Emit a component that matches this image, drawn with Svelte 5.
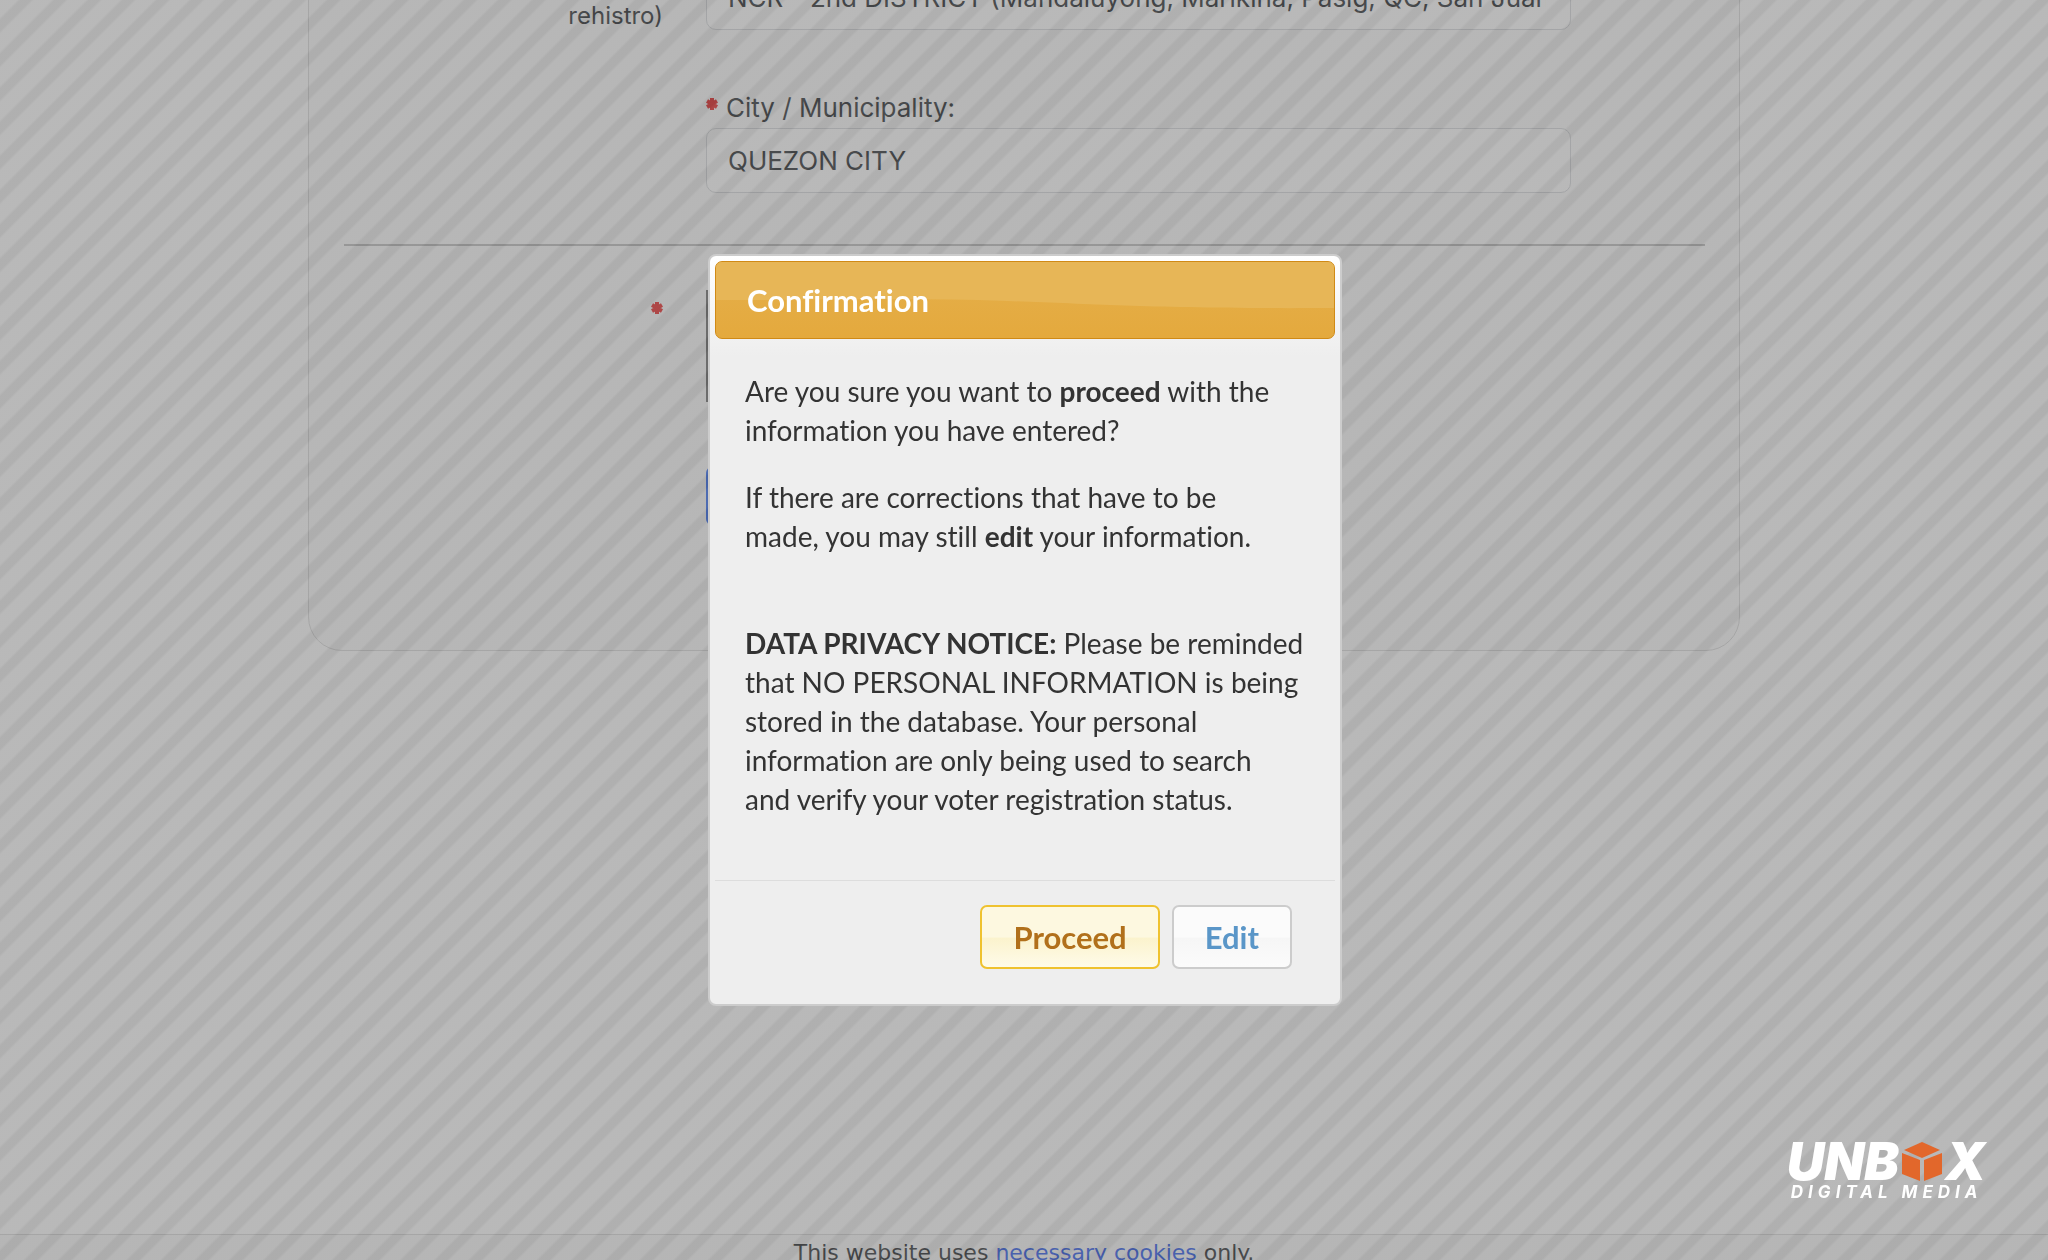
<script>
  let open = true;
  let district = 'ncr2';
  let city = 'qc';

  function close() {
    open = false;
  }
</script>

<div class="page">
  <form class="panel" on:submit|preventDefault>
    <div class="row">
      <label class="side first" for="district">rehistro)</label>
      <div class="fields">
        <select id="district" bind:value={district}>
          <option value="ncr2">NCR - 2nd DISTRICT (Mandaluyong, Marikina, Pasig, QC, San Juan)</option>
        </select>
        <label class="field-label" for="city">
          <svg class="star" viewBox="0 0 12 12" aria-hidden="true">
            <path d="M6 0v12M1 3l10 6M11 3L1 9" />
          </svg>
          City / Municipality:
        </label>
        <select id="city" bind:value={city}>
          <option value="qc">QUEZON CITY</option>
        </select>
      </div>
    </div>

    <hr />

    <div class="row">
      <div class="side">
        <svg class="star" viewBox="0 0 12 12" aria-hidden="true">
          <path d="M6 0v12M1 3l10 6M11 3L1 9" />
        </svg>
      </div>
      <div class="fields">
        <div class="captcha"></div>
        <button class="submit" type="submit" aria-label="Submit"></button>
      </div>
    </div>
  </form>

  <footer>
    <p>This website uses <a href="#cookies">necessary cookies</a> only.</p>
  </footer>
</div>

{#if open}
  <div class="overlay">
    <div class="dialog" role="dialog" aria-modal="true" aria-labelledby="dialog-title">
      <div class="titlebar">
        <svg class="gloss" viewBox="0 0 616 76" preserveAspectRatio="none" aria-hidden="true">
          <path d="M0 38C120 38 200 36 290 39S440 47 616 46V0H0z" />
        </svg>
        <h2 id="dialog-title">Confirmation</h2>
      </div>
      <div class="content">
        <p>
          Are you sure you want to <strong>proceed</strong> with the<br />
          information you have entered?
        </p>
        <p>
          If there are corrections that have to be<br />
          made, you may still <strong>edit</strong> your information.
        </p>
        <p class="notice">
          <strong>DATA PRIVACY NOTICE:</strong> Please be reminded<br />
          that NO PERSONAL INFORMATION is being<br />
          stored in the database. Your personal<br />
          information are only being used to search<br />
          and verify your voter registration status.
        </p>
      </div>
      <div class="actions">
        <button class="btn btn-proceed" type="button" on:click={close}>Proceed</button>
        <button class="btn btn-edit" type="button" on:click={close}>Edit</button>
      </div>
    </div>
  </div>
{/if}

<div class="brand">
  <div class="brand-name">
    <span>UNB</span>
    <svg viewBox="0 0 40 40" aria-hidden="true">
      <path d="M20 0L38 8 20 16 2 8zM0 11l18 7v21L0 32zM22 18l18-7v21l-18 7z" />
    </svg>
    <span>X</span>
  </div>
  <div class="brand-sub">DIGITAL MEDIA</div>
</div>

<style>
  :global(body) {
    background: #fff;
    overflow: hidden;
  }

  .page {
    display: flex;
    flex-direction: column;
    height: 100vh;
    overflow: hidden;
    font-family: Inter, "Liberation Sans", sans-serif;
    font-size: 26px;
    line-height: 40px;
    color: #212529;
  }

  .panel {
    box-sizing: border-box;
    width: 100%;
    max-width: 1432px;
    margin: -72px auto 0;
    padding: 36px 34px 125px 35px;
    background: #fafafa;
    border: 1px solid #d8d8d8;
    border-radius: 34px;
  }

  .row {
    display: grid;
    grid-template-columns: 319px minmax(0, 865px);
    column-gap: 43px;
  }

  .side {
    font-size: 24px;
    text-align: right;
  }

  .side.first {
    padding-top: 31px;
  }

  .fields {
    display: flex;
    flex-direction: column;
    align-items: flex-start;
  }

  .field-label {
    display: flex;
    gap: 8px;
    margin-top: 58px;
  }

  .star {
    width: 12px;
    height: 12px;
    fill: none;
    stroke: #e81c1c;
    stroke-width: 4;
  }

  .field-label .star {
    margin-top: 10px;
  }

  .side .star {
    display: block;
    margin: 12px 0 0 auto;
  }

  select {
    appearance: none;
    box-sizing: border-box;
    width: 100%;
    height: 65px;
    padding: 0 24px 0 21px;
    font: inherit;
    color: inherit;
    background: #fff;
    border: 1px solid #d4d7da;
    border-radius: 10px;
  }

  hr {
    height: 2px;
    margin: 51px 0 44px;
    border: 0;
    background: #bbb;
  }

  .captcha {
    width: 400px;
    height: 112px;
    border-left: 2px solid #666;
  }

  .submit {
    width: 160px;
    height: 58px;
    margin-top: 65px;
    background: #2864f0;
    border: 0;
    border-radius: 6px;
  }

  footer {
    height: 25px;
    margin-top: auto;
    overflow: hidden;
    border-top: 1px solid #d8d8d8;
    background: #f8f8f8;
    font-family: "DejaVu Sans", Verdana, sans-serif;
    font-size: 22px;
    line-height: 36px;
    text-align: center;
  }

  footer p {
    margin: 0;
  }

  footer a {
    color: #2050e8;
    text-decoration: none;
  }

  .overlay {
    position: fixed;
    inset: 0;
    display: grid;
    place-items: center;
    padding-left: 2px;
    background: repeating-linear-gradient(
        135deg,
        rgba(115, 115, 115, 0.5) 0 5%,
        rgba(97, 97, 97, 0.5) 6% 9%,
        rgba(115, 115, 115, 0.5) 10%
      )
      0 0 / 171px 171px;
  }

  .dialog {
    box-sizing: border-box;
    width: 634px;
    max-width: 100%;
    padding: 5px;
    background: linear-gradient(#fff, #eee 100px);
    border: 2px solid #ccc;
    border-radius: 8px;
    font-family: Lato, "Trebuchet MS", sans-serif;
    font-size: 28px;
    font-variant-ligatures: none;
    line-height: 39px;
    color: #333;
  }

  .titlebar {
    position: relative;
    padding: 18px 31px;
    overflow: hidden;
    background: linear-gradient(#e5b04c, #e4a93d);
    border: 1px solid #d08a16;
    border-radius: 7px;
  }

  .gloss {
    position: absolute;
    inset: 0;
    width: 100%;
    height: 100%;
    fill: #e7b657;
  }

  h2 {
    position: relative;
    margin: 0;
    font-size: 31px;
    line-height: 40px;
    color: #fff;
  }

  .content {
    padding: 33px 20px 61px 30px;
  }

  .content p {
    margin: 0 0 28px;
  }

  .content .notice {
    margin: 68px 0 0;
  }

  .actions {
    display: flex;
    justify-content: flex-end;
    gap: 12px;
    padding: 24px 43px 30px;
    border-top: 1px solid #ddd;
  }

  .btn {
    height: 64px;
    padding: 0 31px;
    font: bold 31px Lato, "Trebuchet MS", sans-serif;
    border-radius: 7px;
    cursor: pointer;
  }

  .btn-proceed {
    color: #b1701b;
    background: linear-gradient(#fdf8e0 50%, #fbf3cd 52%, #fefbe9);
    border: 2px solid #efc22f;
  }

  .btn-edit {
    color: #5a96c8;
    background: linear-gradient(#fbfbfb 50%, #f6f6f6 52%, #fbfbfb);
    border: 2px solid #ccc;
  }

  .brand {
    position: fixed;
    right: 62px;
    bottom: 58px;
    color: #fff;
    font-family: Inter, "Open Sans", sans-serif;
    font-style: italic;
  }

  .brand-name {
    display: flex;
    align-items: center;
    gap: 3px;
    font-size: 52px;
    font-weight: 900;
    line-height: 40px;
  }

  .brand-name svg {
    width: 40px;
    height: 40px;
    fill: #e2672b;
  }

  .brand-sub {
    padding-left: 4px;
    font-size: 17px;
    font-weight: 700;
    letter-spacing: 5px;
    line-height: 20px;
  }
</style>
